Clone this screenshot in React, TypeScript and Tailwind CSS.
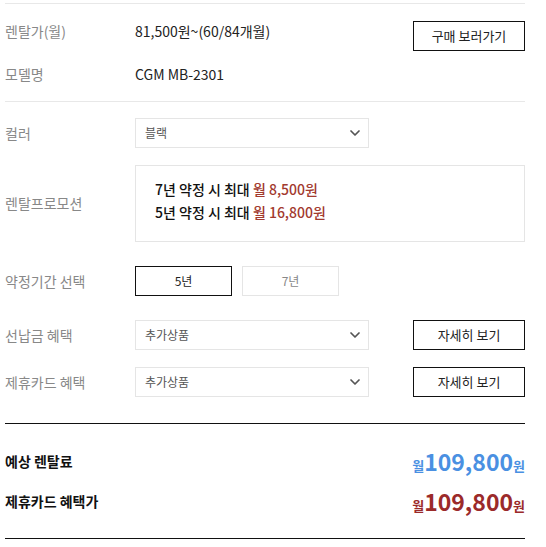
import { ChevronDown } from 'lucide-react'

const font = { fontFamily: '"Noto Sans CJK KR", "Noto Sans", sans-serif' }

function Select({ value }: { value: string }) {
  return (
    <div className="flex h-[30px] w-[234px] items-center justify-between border border-[#e5e5e5] bg-white pl-[9px] pr-[5px] text-[12px] text-[#555]">
      <span>{value}</span>
      <ChevronDown size={16} strokeWidth={2.6} className="text-[#555]" />
    </div>
  )
}

function Row({ label, children }: { label: string; children: React.ReactNode }) {
  return (
    <div className="flex items-center">
      <div className="w-[130px] text-[14px] text-[#888]">{label}</div>
      <div className="flex flex-1 items-center justify-between">{children}</div>
    </div>
  )
}

function OutlineButton({ text }: { text: string }) {
  return (
    <button className="flex h-[30px] w-[112px] items-center justify-center border border-[#111] bg-white text-[13px] text-[#222]">
      {text}
    </button>
  )
}

function Price({ color }: { color: string }) {
  return (
    <span className={`flex items-baseline font-bold ${color}`}>
      <span className="text-[13px]">월</span>
      <span className="text-[23px] leading-[30px]">109,800</span>
      <span className="text-[13px]">원</span>
    </span>
  )
}

export default function App() {
  return (
    <div className="min-h-screen bg-white pl-[5px] pt-[3px]" style={font}>
      <div className="w-[520px]">
        {/* basic info */}
        <div className="border-t border-[#e8e8e8] pb-[12px] pt-[17px]">
          <div className="flex items-start">
            <div className="w-[130px] text-[14px] leading-[20px] text-[#888]">렌탈가(월)</div>
            <div className="flex flex-1 items-start justify-between">
              <span className="text-[14px] leading-[20px] text-[#222]">81,500원~(60/84개월)</span>
              <OutlineButton text="구매 보러가기" />
            </div>
          </div>
          <div className="mt-[8px] h-[30px]">
            <Row label="모델명">
              <span className="flex h-[30px] items-center text-[14px] text-[#222]">CGM MB-2301</span>
            </Row>
          </div>
        </div>

        {/* options */}
        <div className="border-t border-[#e8e8e8] pb-[26px] pt-[16px]">
          <Row label="컬러">
            <Select value="블랙" />
          </Row>

          <div className="mt-[17px]">
            <Row label="렌탈프로모션">
              <div className="flex h-[77px] w-full flex-col justify-center border border-[#e5e5e5] pb-[6px] pl-[19px] text-[14px] font-medium leading-[23px] text-[#111]">
                <div>
                  7년 약정 시 최대 <span className="text-[#a23a2f]">월 8,500원</span>
                </div>
                <div>
                  5년 약정 시 최대 <span className="text-[#a23a2f]">월 16,800원</span>
                </div>
              </div>
            </Row>
          </div>

          <div className="mt-[24px]">
            <Row label="약정기간 선택">
              <div className="flex gap-[10px]">
                <button className="flex h-[30px] w-[97px] items-center justify-center border border-[#111] bg-white text-[12px] text-[#222]">
                  5년
                </button>
                <button className="flex h-[30px] w-[97px] items-center justify-center border border-[#e5e5e5] bg-white text-[12px] text-[#888]">
                  7년
                </button>
              </div>
            </Row>
          </div>

          <div className="mt-[24px]">
            <Row label="선납금 혜택">
              <Select value="추가상품" />
              <OutlineButton text="자세히 보기" />
            </Row>
          </div>

          <div className="mt-[17px]">
            <Row label="제휴카드 혜택">
              <Select value="추가상품" />
              <OutlineButton text="자세히 보기" />
            </Row>
          </div>
        </div>

        {/* totals */}
        <div className="border-y border-[#111] pb-[22px] pt-[22px]">
          <div className="flex h-[30px] items-center justify-between">
            <span className="text-[14px] font-bold text-[#111]">예상 렌탈료</span>
            <Price color="text-[#4a90e2]" />
          </div>
          <div className="mt-[10px] flex h-[30px] items-center justify-between">
            <span className="text-[14px] font-bold text-[#111]">제휴카드 혜택가</span>
            <Price color="text-[#9b2a2a]" />
          </div>
        </div>
      </div>
    </div>
  )
}
